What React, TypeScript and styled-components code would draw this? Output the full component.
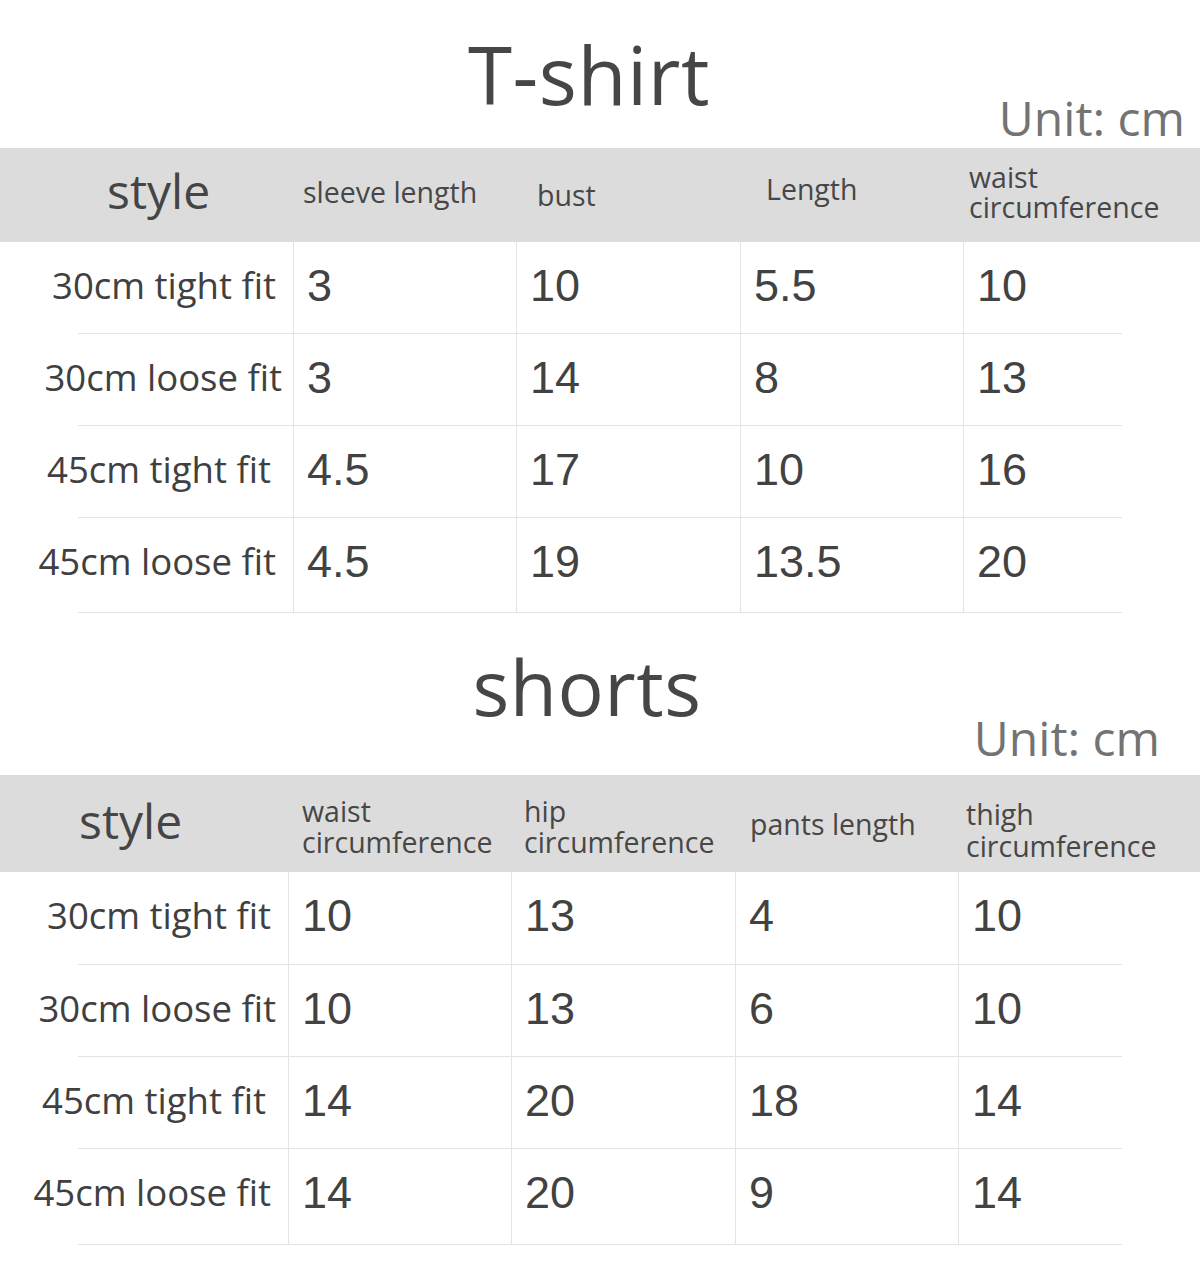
import React from "react";
import styled, { createGlobalStyle } from "styled-components";

const GlobalStyle = createGlobalStyle`
  html, body { margin: 0; padding: 0; background: #ffffff; }
  body { font-family: "Open Sans", "Noto Sans", sans-serif; }
`;

const Page = styled.div`
  width: 1200px;
  height: 1267px;
  background: #ffffff;
  display: flex;
  flex-direction: column;
  overflow: hidden;
`;

const Section = styled.section`
  display: flex;
  flex-direction: column;
`;

const TitleBlock = styled.div<{ $h: number }>`
  height: ${(p) => p.$h}px;
  display: grid;
  grid-template-areas: "a";
`;

const Title = styled.h1<{ $shift: number; $size: number }>`
  grid-area: a;
  margin: 34px 0 0 0;
  align-self: start;
  justify-self: center;
  transform: translateX(${(p) => p.$shift}px);
  font-family: "Open Sans", sans-serif;
  font-weight: 400;
  font-size: ${(p) => p.$size}px;
  line-height: 80px;
  color: #464646;
  letter-spacing: 0.5px;
`;

const Unit = styled.div<{ $right: number; $bottom: number }>`
  grid-area: a;
  align-self: end;
  justify-self: end;
  margin: 0 ${(p) => p.$right}px ${(p) => p.$bottom}px 0;
  font-family: "Open Sans", sans-serif;
  font-size: 48px;
  line-height: 48px;
  color: #737373;
`;

const HeaderBand = styled.div<{ $label: number; $h: number }>`
  height: ${(p) => p.$h}px;
  background: #dcdcdc;
  display: grid;
  grid-template-columns: ${(p) => p.$label}px 223px 224px 223px 1fr;
`;

const shiftPad = (dy: number) =>
  `padding-top: ${Math.max(dy, 0) * 2}px; padding-bottom: ${Math.max(-dy, 0) * 2}px;`;

const StyleHead = styled.div<{ $pad: number; $dy: number }>`
  display: flex;
  align-items: center;
  padding-left: ${(p) => p.$pad}px;
  ${(p) => shiftPad(p.$dy)}
  font-family: "Open Sans", sans-serif;
  font-size: 48px;
  color: #454545;
`;

const ColHead = styled.div<{ $pad: number; $dy: number; $lh: number }>`
  display: flex;
  align-items: center;
  padding-left: ${(p) => p.$pad}px;
  ${(p) => shiftPad(p.$dy)}
  font-family: "Open Sans", sans-serif;
  font-size: 28.5px;
  line-height: ${(p) => p.$lh}px;
  color: #474747;
  white-space: nowrap;
`;

const Body = styled.div`
  margin-left: 78px;
  width: 1044px;
  display: flex;
  flex-direction: column;
`;

const Row = styled.div<{ $label: number; $h: number }>`
  --extra: ${(p) => p.$h - 92}px;
  height: ${(p) => p.$h}px;
  box-sizing: border-box;
  display: grid;
  grid-template-columns: ${(p) => p.$label}px 223px 224px 223px 1fr;
  border-bottom: 1.5px solid #e2e2e2;
`;

const LabelCell = styled.div<{ $pad: number }>`
  display: flex;
  justify-content: flex-end;
  align-items: center;
  padding-right: ${(p) => p.$pad}px;
  padding-bottom: calc(5px + var(--extra));
  font-family: "Open Sans", sans-serif;
  font-size: 36.5px;
  color: #404040;
  white-space: nowrap;
  min-width: 0;
`;

const ValueCell = styled.div`
  display: flex;
  align-items: center;
  padding-left: 13px;
  padding-bottom: calc(4px + var(--extra));
  border-left: 1px solid #e4e4e4;
  font-family: "Liberation Sans", Arial, sans-serif;
  font-size: 45px;
  color: #424242;
`;

type Head = { text: string[]; pad: number; dy: number; lh: number };
type RowData = { label: string; pad: number; values: string[]; h: number };

type TableProps = {
  title: string;
  titleShift: number;
  titleSize: number;
  blockH: number;
  unitRight: number;
  unitBottom: number;
  labelW: number;
  headH: number;
  stylePad: number;
  styleDy: number;
  heads: Head[];
  rows: RowData[];
};

function SizeTable(p: TableProps) {
  return (
    <Section>
      <TitleBlock $h={p.blockH}>
        <Title $shift={p.titleShift} $size={p.titleSize}>
          {p.title}
        </Title>
        <Unit $right={p.unitRight} $bottom={p.unitBottom}>
          Unit: cm
        </Unit>
      </TitleBlock>
      <HeaderBand $label={p.labelW} $h={p.headH}>
        <StyleHead $pad={p.stylePad} $dy={p.styleDy}>
          style
        </StyleHead>
        {p.heads.map((h, i) => (
          <ColHead key={i} $pad={h.pad} $dy={h.dy} $lh={h.lh}>
            <span>
              {h.text.map((t, j) => (
                <React.Fragment key={j}>
                  {j > 0 && <br />}
                  {t}
                </React.Fragment>
              ))}
            </span>
          </ColHead>
        ))}
      </HeaderBand>
      <Body>
        {p.rows.map((r, i) => (
          <Row key={i} $label={p.labelW - 78} $h={r.h}>
            <LabelCell $pad={r.pad}>{r.label}</LabelCell>
            {r.values.map((v, j) => (
              <ValueCell key={j}>{v}</ValueCell>
            ))}
          </Row>
        ))}
      </Body>
    </Section>
  );
}

const tshirt: TableProps = {
  title: "T-shirt",
  titleShift: -11,
  titleSize: 80,
  blockH: 148,
  unitRight: 15,
  unitBottom: 6,
  labelW: 293,
  headH: 94,
  stylePad: 107,
  styleDy: -5,
  heads: [
    { text: ["sleeve length"], pad: 10, dy: -3, lh: 30 },
    { text: ["bust"], pad: 21, dy: 0, lh: 30 },
    { text: ["Length"], pad: 26, dy: -6, lh: 30 },
    { text: ["waist", "circumference"], pad: 6, dy: -3, lh: 30 },
  ],
  rows: [
    { label: "30cm tight fit", pad: 17, values: ["3", "10", "5.5", "10"], h: 92 },
    { label: "30cm loose fit", pad: 11, values: ["3", "14", "8", "13"], h: 92 },
    { label: "45cm tight fit", pad: 22, values: ["4.5", "17", "10", "16"], h: 92 },
    { label: "45cm loose fit", pad: 17, values: ["4.5", "19", "13.5", "20"], h: 95 },
  ],
};

const shorts: TableProps = {
  title: "shorts",
  titleShift: -13,
  titleSize: 77,
  blockH: 162,
  unitRight: 40,
  unitBottom: 13,
  labelW: 288,
  headH: 97,
  stylePad: 79,
  styleDy: -3,
  heads: [
    { text: ["waist", "circumference"], pad: 14, dy: 3, lh: 31 },
    { text: ["hip", "circumference"], pad: 13, dy: 3, lh: 31 },
    { text: ["pants length"], pad: 15, dy: 1, lh: 31 },
    { text: ["thigh", "circumference"], pad: 8, dy: 6, lh: 32 },
  ],
  rows: [
    { label: "30cm tight fit", pad: 17, values: ["10", "13", "4", "10"], h: 93 },
    { label: "30cm loose fit", pad: 12, values: ["10", "13", "6", "10"], h: 92 },
    { label: "45cm tight fit", pad: 22, values: ["14", "20", "18", "14"], h: 92 },
    { label: "45cm loose fit", pad: 17, values: ["14", "20", "9", "14"], h: 96 },
  ],
};

export default function App() {
  return (
    <>
      <GlobalStyle />
      <Page>
        <SizeTable {...tshirt} />
        <SizeTable {...shorts} />
      </Page>
    </>
  );
}
